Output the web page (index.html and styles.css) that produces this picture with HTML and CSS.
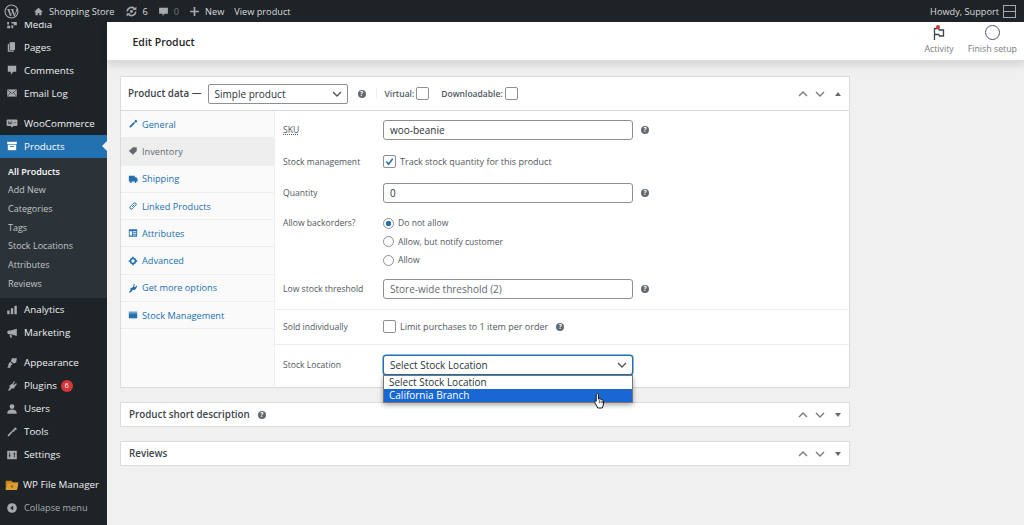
FILE: index.html
```html
<!DOCTYPE html>
<html lang="en">
<head>
    <meta charset="UTF-8">
    <meta name="viewport" content="width=device-width, initial-scale=1.0">
    <title>Edit Product</title>
    <link rel="stylesheet" href="styles.css">
</head>
<body>
    <!-- Admin bar -->
    <header class="adminbar">
        <div class="bar-left">
            <svg class="bar-logo" viewBox="0 0 20 20"><circle cx="10" cy="10" r="8.6" fill="none" stroke="#a7aaad" stroke-width="1.5"/><path d="M3.6 6.6h4.6v.7H7.2l2.2 7 1.3-4-1-3h-.9v-.7h4.4v.7h-1l2.2 7 1.5-4.6c.5-1.600-.3-2.400-.7-2.400h3l-3.900 9.200h-1.200l-1.900-5.400-1.800 5.400H8.200L4.600 7.300h-1z" fill="#a7aaad"/></svg>
            <span class="bar-item"><svg class="bar-icon" viewBox="0 0 20 20"><path d="M10 3 2 10.500h2.500V17h4.200v-4.500h2.600V17h4.200v-6.500H18z" fill="#a7aaad"/></svg>Shopping Store</span>
            <span class="bar-item"><svg class="bar-icon wide" viewBox="0 0 20 20"><path d="M3.500 10a6.500 6.500 0 0 1 11-4.500M16.500 10a6.500 6.500 0 0 1-11 4.500" fill="none" stroke="#a7aaad" stroke-width="2.400"/><path d="M11.500 7.500h6v-5zM8.500 12.500h-6v5z" fill="#a7aaad"/><circle cx="10" cy="10" r="2.300" fill="#a7aaad"/></svg>6</span>
            <span class="bar-item dim"><svg class="bar-icon" viewBox="0 0 20 20"><path d="M2 3h16v11h-6l-3.500 4v-4H2z" fill="#a7aaad"/></svg>0</span>
            <span class="bar-item"><svg class="bar-icon" viewBox="0 0 20 20"><path d="M8.500 2h3v6.500H18v3h-6.500V18h-3v-6.500H2v-3h6.500z" fill="#a7aaad"/></svg>New</span>
            <span class="bar-item">View product</span>
        </div>
        <div class="bar-right">
            <span>Howdy, Support</span>
            <span class="avatar"></span>
        </div>
    </header>

    <div class="wrap">
        <!-- Sidebar -->
        <nav class="sidebar">
            <a class="menu-item first"><svg class="menu-icon" viewBox="0 0 20 20"><path d="M2 3h5v3H5v5H2zM9 3h9v9h-5V9H9zM2 13h5v4H2zM9 12h3v5H9z" fill="#a7aaad"/></svg>Media</a>
            <a class="menu-item"><svg class="menu-icon" viewBox="0 0 20 20"><path d="M6 2h9v13H6z" fill="#a7aaad"/><path d="M3 5h2v11h8v2H3z" fill="#a7aaad"/></svg>Pages</a>
            <a class="menu-item"><svg class="menu-icon" viewBox="0 0 20 20"><path d="M3 3h14v10h-5l-4 5v-5H3z" fill="#a7aaad"/></svg>Comments</a>
            <a class="menu-item"><svg class="menu-icon" viewBox="0 0 20 20"><path d="M2 4h16v12H2z" fill="#a7aaad"/><path d="m2.500 5 7.500 6 7.500-6M2.500 15.500 7.500 9M17.500 15.500 12.500 9" fill="none" stroke="#1d2327"/></svg>Email Log</a>
            <a class="menu-item gap"><svg class="menu-icon" viewBox="0 0 20 20"><rect x="1" y="4" width="18" height="11" rx="2" fill="#a7aaad"/><path d="m8 15 4 0-2 3z" fill="#a7aaad"/><path d="m4 7 1 5 1.500-3 1.500 3 1-5M11 9.500h1M14 9.500h2" fill="none" stroke="#1d2327" stroke-width="1.100"/></svg>WooCommerce</a>
            <a class="menu-item current"><svg class="menu-icon" viewBox="0 0 20 20"><path d="M2 3h16v4H2z" fill="#fff"/><path d="M3 8h14v9H3z" fill="#fff"/><path d="M7 10h6v1.500H7z" fill="#2271b1"/></svg>Products</a>
            <ul class="submenu">
                <li class="active">All Products</li>
                <li>Add New</li>
                <li>Categories</li>
                <li>Tags</li>
                <li>Stock Locations</li>
                <li>Attributes</li>
                <li>Reviews</li>
            </ul>
            <a class="menu-item"><svg class="menu-icon" viewBox="0 0 20 20"><path d="M2 11h4v6H2zM8 7h4v10H8zM14 3h4v14h-4z" fill="#a7aaad"/></svg>Analytics</a>
            <a class="menu-item"><svg class="menu-icon" viewBox="0 0 20 20"><path d="M18 3v12L8 12H5a3 3 0 0 1 0-6h3z" fill="#a7aaad"/><path d="M6 13h3l1 5H7.500z" fill="#a7aaad"/></svg>Marketing</a>
            <a class="menu-item gap"><svg class="menu-icon" viewBox="0 0 20 20"><path d="M10 2h8l-1 7-4 2-5-4zM7 8l4 4-3 2-1 4H3l-1-1c2-1 2-3 2-5z" fill="#a7aaad"/></svg>Appearance</a>
            <a class="menu-item"><svg class="menu-icon" viewBox="0 0 20 20"><path d="m13 2 2 1-3 4 2 1 3-3 1 2-3 4-2 3-4 0-2 3-4 1 3-5 0-4 5-3z" fill="#a7aaad"/></svg>Plugins<span class="count">6</span></a>
            <a class="menu-item"><svg class="menu-icon" viewBox="0 0 20 20"><circle cx="10" cy="6" r="4" fill="#a7aaad"/><path d="M2 18c0-5 3-7 8-7s8 2 8 7z" fill="#a7aaad"/></svg>Users</a>
            <a class="menu-item"><svg class="menu-icon" viewBox="0 0 20 20"><path d="M14 2c2 0 4 2 4 4l-3 1-2-2 2-3zM12.500 5l2.500 3-1 1-2.500.5L5 17c-1 1-3-1-2-2l7.500-7.500z" fill="#a7aaad"/></svg>Tools</a>
            <a class="menu-item"><svg class="menu-icon" viewBox="0 0 20 20"><path d="M2 3h16v14H2z" fill="#a7aaad"/><path d="M6 6v8M14 6v8M4.500 11h3M12.500 8h3" stroke="#1d2327" stroke-width="1.300" fill="none"/></svg>Settings</a>
            <a class="menu-item gap"><svg class="menu-icon big" viewBox="0 0 20 20"><path d="M1 4h8l2 2h8l-2 11H1z" fill="#c98a1f"/><path d="M4 8h15l-2 9H1z" fill="#dd9f33"/><circle cx="10" cy="12" r="2" fill="#a5701a"/></svg>WP File Manager</a>
            <a class="menu-item collapse"><svg class="menu-icon" viewBox="0 0 20 20"><circle cx="10" cy="10" r="8" fill="#a7aaad"/><path d="M12 6v8l-5-4z" fill="#1d2327"/></svg>Collapse menu</a>
        </nav>

        <main class="main">
            <!-- Page header -->
            <div class="page-head">
                <span class="page-title">Edit Product</span>
                <div class="head-actions">
                    <div class="head-action">
                        <span class="flag"><svg viewBox="0 0 16 16" width="16" height="16"><path d="M3.500 3v12M3.500 3.500h4l.8 1.500h4.200v6H8.500l-.8-1.500h-4.200" fill="none" stroke="#3c434a" stroke-width="1.300"/></svg><i class="flag-dot"></i></span>
                        <span>Activity</span>
                    </div>
                    <div class="head-action">
                        <span class="ring"></span>
                        <span>Finish setup</span>
                    </div>
                </div>
            </div>

            <!-- Product data -->
            <section class="box">
                <div class="box-head">
                    <strong class="box-title">Product data —</strong>
                    <span class="fake-select type-select">Simple product<svg class="chev" viewBox="0 0 10 6"><path d="m1 1 4 4 4-4" fill="none" stroke="#50575e" stroke-width="1.400"/></svg></span>
                    <span class="help"></span>
                    <span class="head-sep"></span>
                    <label class="head-check">Virtual: <span class="check"></span></label>
                    <label class="head-check">Downloadable: <span class="check"></span></label>
                    <span class="handles">
                        <svg viewBox="0 0 10 6"><path d="m1 5 4-4 4 4" fill="none" stroke="#787c82" stroke-width="1.400"/></svg>
                        <svg viewBox="0 0 10 6"><path d="m1 1 4 4 4-4" fill="none" stroke="#787c82" stroke-width="1.400"/></svg>
                        <i class="tri up"></i>
                    </span>
                </div>
                <div class="box-body">
                    <ul class="tabs">
                        <li><svg viewBox="0 0 12 12"><path d="M9 1c1 0 2 1 2 2.500L9 4.500 7.500 3zM7 3.500 8.500 5 7.500 6 3 10.500 1.500 9 6 4.500z" fill="#2271b1"/></svg>General</li>
                        <li class="on"><svg viewBox="0 0 12 12"><path d="M1 6 6 1.500h4.500V6L6 10.500z" fill="#646970"/></svg>Inventory</li>
                        <li><svg viewBox="0 0 12 12"><path d="M1 2h7v7H1zM8 4h2l1.500 2v3H8z" fill="#2271b1"/><circle cx="3.500" cy="9.500" r="1.200" fill="#2271b1"/><circle cx="9" cy="9.500" r="1.200" fill="#2271b1"/></svg>Shipping</li>
                        <li><svg viewBox="0 0 12 12"><path d="M5 7 7.500 4.500M4.500 5 2.500 7a1.800 1.800 0 0 0 2.500 2.500L7 7.500M5 4.500 7 2.500A1.800 1.800 0 0 1 9.500 5L7.500 7" fill="none" stroke="#2271b1" stroke-width="1.200"/></svg>Linked Products</li>
                        <li><svg viewBox="0 0 12 12"><path d="M1 1.500h10v9H1z" fill="#2271b1"/><path d="M2 4h3v5H2zM6 4h4v1H6zM6 6h4v1H6zM6 8h4v1H6z" fill="#fff"/></svg>Attributes</li>
                        <li><svg viewBox="0 0 12 12"><circle cx="6" cy="6" r="3" fill="none" stroke="#2271b1" stroke-width="2"/><path d="M5 .800h2v2H5zM5 9.200h2v2H5zM.800 5h2v2h-2zM9.200 5h2v2h-2z" fill="#2271b1"/></svg>Advanced</li>
                        <li><svg viewBox="0 0 12 12"><path d="M7 1 8.500 2 7 4l1.500 1L10 3l1 1-1.500 3-1.500 1.500H5.500L3.500 11 1 11.500 3 8V6l3-1z" fill="#2271b1"/></svg>Get more options</li>
                        <li><svg viewBox="0 0 12 12"><path d="M1 2h10v8H1z" fill="#2271b1"/><path d="M1 3.500h10" stroke="#fff" stroke-width=".7"/></svg>Stock Management</li>
                    </ul>
                    <div class="panel">
                        <div class="group first-group">
                            <div class="row row-sku">
                                <span class="label sku">SKU</span>
                                <span class="field">woo-beanie</span>
                                <span class="help"></span>
                            </div>
                            <div class="row row-check">
                                <span class="label">Stock management</span>
                                <span class="check checked"><svg viewBox="0 0 12 12"><path d="m2.500 6 2.500 3 4.500-6" fill="none" stroke="#2271b1" stroke-width="1.700"/></svg></span>
                                <span class="desc">Track stock quantity for this product</span>
                            </div>
                            <div class="row row-qty">
                                <span class="label">Quantity</span>
                                <span class="field">0</span>
                                <span class="help"></span>
                            </div>
                            <div class="row row-radio">
                                <span class="label">Allow backorders?</span>
                                <div class="radios">
                                    <div class="radio-line"><span class="radio on"></span>Do not allow</div>
                                    <div class="radio-line"><span class="radio"></span>Allow, but notify customer</div>
                                    <div class="radio-line"><span class="radio"></span>Allow</div>
                                </div>
                            </div>
                            <div class="row row-low">
                                <span class="label">Low stock threshold</span>
                                <span class="field holder">Store-wide threshold (2)</span>
                                <span class="help"></span>
                            </div>
                        </div>
                        <div class="group sold-group">
                            <div class="row">
                                <span class="label">Sold individually</span>
                                <span class="check"></span>
                                <span class="desc">Limit purchases to 1 item per order</span>
                                <span class="help near"></span>
                            </div>
                        </div>
                        <div class="group location-group">
                            <div class="row">
                                <span class="label">Stock Location</span>
                                <div class="select-wrap">
                                    <span class="fake-select focused">Select Stock Location<svg class="chev" viewBox="0 0 10 6"><path d="m1 1 4 4 4-4" fill="none" stroke="#50575e" stroke-width="1.400"/></svg></span>
                                    <ul class="dropdown">
                                        <li>Select Stock Location</li>
                                        <li class="picked">California Branch</li>
                                    </ul>
                                    <svg class="cursor" viewBox="0 0 16 20" width="14" height="18"><path d="M5 1.500c.8 0 1.300.6 1.300 1.300v5l1-.2 1 .2 1 .2 1 .3c.9.300 1.700.8 1.700 2v3c0 2-1 3-1.500 4.700H5.500L2 11.500c-.5-1 .5-2 1.700-1.200V2.800C3.700 2.100 4.200 1.500 5 1.500z" fill="#fff" stroke="#111" stroke-width="1.100" stroke-linejoin="round"/><path d="M7.300 9v3.500M9.300 9.500v3M11 10v2.500" stroke="#111" stroke-width=".8"/></svg>
                                </div>
                            </div>
                        </div>
                    </div>
                </div>
            </section>

            <section class="box closed">
                <strong class="closed-title">Product short description</strong>
                <span class="help desc-help"></span>
                <span class="handles">
                    <svg viewBox="0 0 10 6"><path d="m1 5 4-4 4 4" fill="none" stroke="#787c82" stroke-width="1.400"/></svg>
                    <svg viewBox="0 0 10 6"><path d="m1 1 4 4 4-4" fill="none" stroke="#787c82" stroke-width="1.400"/></svg>
                    <i class="tri"></i>
                </span>
            </section>
            <section class="box closed">
                <strong class="closed-title">Reviews</strong>
                <span class="handles">
                    <svg viewBox="0 0 10 6"><path d="m1 5 4-4 4 4" fill="none" stroke="#787c82" stroke-width="1.400"/></svg>
                    <svg viewBox="0 0 10 6"><path d="m1 1 4 4 4-4" fill="none" stroke="#787c82" stroke-width="1.400"/></svg>
                    <i class="tri"></i>
                </span>
            </section>
        </main>
    </div>
</body>
</html>
```

FILE: styles.css
```css
/* Global Styles */
body {
    margin: 0;
    height: 525px;
    overflow: hidden;
    background: #f0f0f1;
    font-family: "Open Sans", "Noto Sans", sans-serif;
    font-size: 9.5px;
    color: #3c434a;
}

ul {
    list-style: none;
    margin: 0;
    padding: 0;
}

/* Admin bar */
.adminbar {
    height: 22px;
    background: #1d2327;
    color: #dcdcde;
    display: flex;
    justify-content: space-between;
    align-items: center;
    padding: 0 8px 0 4px;
    font-size: 9.2px;
    position: relative;
    z-index: 2;
}

.bar-left,
.bar-right,
.bar-item {
    display: flex;
    align-items: center;
}

.bar-logo {
    width: 15px;
    height: 15px;
    margin-right: 14px;
}

.bar-item {
    margin-right: 10px;
}

.bar-icon {
    width: 11px;
    height: 11px;
    margin-right: 5px;
}

.bar-icon.wide {
    width: 13px;
    height: 13px;
}

.bar-item.dim {
    color: #72777c;
}

.avatar {
    width: 11px;
    height: 11px;
    border: 1px solid #a7aaad;
    margin-left: 4px;
    background: linear-gradient(#1d2327 5px, #a7aaad 5px, #a7aaad 6px, #1d2327 6px);
}

.wrap {
    display: flex;
    height: 503px;
}

/* Sidebar */
.sidebar {
    width: 106.5px;
    flex-shrink: 0;
    background: #1d2327;
    overflow: hidden;
}

.menu-item {
    display: flex;
    align-items: center;
    height: 23px;
    padding-left: 6px;
    color: #f0f0f1;
    font-size: 9.8px;
    position: relative;
}

.menu-item.first {
    margin-top: -9.5px;
}

.menu-item.gap {
    margin-top: 7px;
}

.menu-icon {
    width: 12px;
    height: 12px;
    margin-right: 6px;
    flex-shrink: 0;
}

.menu-icon.big {
    width: 16px;
    height: 14px;
    margin: 0 3px 0 -2px;
}

.menu-item.current {
    background: #2271b1;
    color: #fff;
}

.menu-item.current::after {
    content: "";
    position: absolute;
    right: 0;
    top: 6px;
    border: 5px solid transparent;
    border-right-color: #f0f0f1;
    border-left-width: 0;
}

.menu-item.collapse {
    color: #a7aaad;
    font-size: 9.2px;
}

.count {
    background: #d63638;
    color: #fff;
    font-size: 7px;
    width: 12px;
    height: 12px;
    line-height: 12px;
    border-radius: 50%;
    text-align: center;
    margin-left: 4px;
}

.submenu {
    background: #2c3338;
    padding: 5px 0;
    color: #c3c4c7;
    font-size: 9px;
}

.submenu li {
    height: 18.7px;
    line-height: 18.7px;
    padding-left: 8px;
}

.submenu .active {
    color: #fff;
    font-weight: 600;
}

/* Page header */
.main {
    flex: 1;
    min-width: 0;
}

.page-head {
    height: 39px;
    background: #fff;
    display: flex;
    justify-content: space-between;
    padding: 0 7px 0 26px;
    box-shadow: 0 4px 8px rgba(0, 0, 0, 0.12);
    border-bottom: 1px solid #dcdcde;
    box-sizing: border-box;
}

.page-title {
    font-size: 10.5px;
    font-weight: 600;
    color: #1d2327;
    line-height: 40px;
}

.head-actions {
    display: flex;
    gap: 14px;
}

.head-action {
    display: flex;
    flex-direction: column;
    align-items: center;
    justify-content: flex-end;
    padding-bottom: 5px;
    font-size: 8.8px;
    color: #787c82;
    gap: 2px;
}

.flag {
    position: relative;
    width: 16px;
    height: 16px;
}

.flag-dot {
    position: absolute;
    left: 5px;
    top: 0;
    width: 4px;
    height: 4px;
    border-radius: 50%;
    background: #d63638;
}

.ring {
    width: 13px;
    height: 13px;
    border: 1.5px solid #50575e;
    border-radius: 50%;
    margin-bottom: 1px;
}

/* Meta boxes */
.box {
    width: 730px;
    margin-left: 13.5px;
    background: #fff;
    border: 1px solid #dcdcde;
    box-sizing: border-box;
    margin-top: 15px;
}

.box-head {
    height: 34px;
    display: flex;
    align-items: center;
    padding: 0 7px;
    border-bottom: 1px solid #dcdcde;
    box-sizing: border-box;
}

.box-title,
.closed-title {
    font-size: 9.8px;
    font-weight: 600;
    color: #3c434a;
}

.fake-select {
    display: flex;
    justify-content: space-between;
    align-items: center;
    height: 20px;
    box-sizing: border-box;
    border: 1px solid #8c8f94;
    border-radius: 2px;
    padding: 0 5px 0 6px;
    background: #fff;
    font-size: 10px;
    color: #2c3338;
}

.type-select {
    width: 140px;
    margin-left: 6px;
}

.chev {
    width: 10px;
    height: 6px;
}

.help {
    width: 8px;
    height: 8px;
    border-radius: 50%;
    background: #646970;
    display: inline-block;
    flex-shrink: 0;
    position: relative;
}

.help::after {
    content: "?";
    position: absolute;
    left: 0;
    right: 0;
    top: 0;
    text-align: center;
    color: #fff;
    font-size: 6.5px;
    line-height: 8px;
    font-weight: 700;
}

.box-head .help {
    margin-left: 10px;
}

.head-sep {
    width: 1px;
    height: 11px;
    background: #eee;
    margin: 0 8px 0 10px;
}

.head-check {
    display: flex;
    align-items: center;
    gap: 2px;
    margin-right: 12px;
    font-size: 8.5px;
    font-weight: 600;
    color: #50575e;
}

.check {
    width: 11px;
    height: 11px;
    border: 1px solid #8c8f94;
    border-radius: 2px;
    background: #fff;
    display: inline-block;
    flex-shrink: 0;
}

.check svg {
    display: block;
    width: 11px;
    height: 11px;
}

.handles {
    margin-left: auto;
    display: flex;
    align-items: center;
    gap: 7px;
    padding-right: 1px;
}

.handles svg {
    width: 10px;
    height: 6px;
}

.tri {
    margin-left: 3px;
    border-left: 3px solid transparent;
    border-right: 3px solid transparent;
    border-top: 4px solid #646970;
}

.tri.up {
    border-top: 0;
    border-bottom: 4px solid #646970;
}

.box-body {
    display: flex;
    height: 276px;
}

/* Tabs */
.tabs {
    width: 154px;
    background: #fafafa;
    border-right: 1px solid #eee;
    box-sizing: border-box;
    flex-shrink: 0;
    color: #2271b1;
    font-size: 9.2px;
}

.tabs li {
    height: 27.3px;
    display: flex;
    align-items: center;
    padding-left: 7px;
    border-bottom: 1px solid #eee;
    box-sizing: border-box;
}

.tabs svg {
    width: 10px;
    height: 10px;
    margin-right: 4px;
}

.tabs .on {
    background: #eee;
    color: #646970;
}

/* Form panel */
.panel {
    flex: 1;
    font-size: 8.6px;
    color: #50575e;
}

.group {
    padding: 0 8px;
}

.first-group {
    padding-top: 9px;
    padding-bottom: 10px;
    border-bottom: 1px solid #eee;
}

.sold-group {
    height: 35px;
    display: flex;
    flex-direction: column;
    justify-content: center;
    border-bottom: 1px solid #eee;
    box-sizing: border-box;
}

.location-group {
    padding-top: 10px;
}

.row {
    display: flex;
    align-items: center;
}

.label {
    width: 100px;
    flex-shrink: 0;
}

.sku {
    text-decoration: underline dotted;
}

.field {
    width: 250px;
    height: 20px;
    line-height: 18px;
    box-sizing: border-box;
    border: 1px solid #8c8f94;
    border-radius: 3px;
    padding: 0 6px;
    background: #fff;
    font-size: 10px;
    color: #2c3338;
}

.holder {
    color: #646970;
}

.field + .help {
    margin-left: 8px;
}

.desc {
    margin-left: 4px;
    font-size: 9px;
}

.help.near {
    margin-left: 8px;
}

.row-check {
    margin-top: 15px;
}

.row-qty {
    margin-top: 15px;
}

.row-radio {
    margin-top: 14px;
    align-items: flex-start;
}

.row-low {
    margin-top: 12px;
}

.radios {
    display: flex;
    flex-direction: column;
    gap: 6px;
}

.radio-line {
    display: flex;
    align-items: center;
    gap: 4px;
    height: 12.500px;
    font-size: 8.6px;
}

.radio {
    width: 11px;
    height: 11px;
    border: 1px solid #8c8f94;
    border-radius: 50%;
    box-sizing: border-box;
    background: #fff;
}

.radio.on {
    background: radial-gradient(circle, #2271b1 0 2.500px, #fff 3px);
}

.select-wrap {
    position: relative;
    width: 250px;
}

.focused {
    border-color: #2271b1;
    box-shadow: 0 0 0 .5px #2271b1;
    border-radius: 3px;
}

/* Open dropdown, sits over the boxes below */
.dropdown {
    position: absolute;
    left: 0;
    right: 0;
    top: 20px;
    background: #fff;
    border: 1px solid #767676;
    box-shadow: 0 2px 5px rgba(0, 0, 0, 0.35);
    font-size: 10px;
    color: #2c3338;
    z-index: 3;
}

.dropdown li {
    height: 13.400px;
    line-height: 13.400px;
    padding-left: 5px;
}

.dropdown .picked {
    background: #1967d2;
    color: #fff;
}

.cursor {
    position: absolute;
    left: 210px;
    top: 37px;
    z-index: 4;
}

.box.closed {
    height: 25px;
    display: flex;
    align-items: center;
    padding: 0 7px 0 8px;
    margin-top: 14px;
}

.desc-help {
    margin-left: 8px;
}
```
